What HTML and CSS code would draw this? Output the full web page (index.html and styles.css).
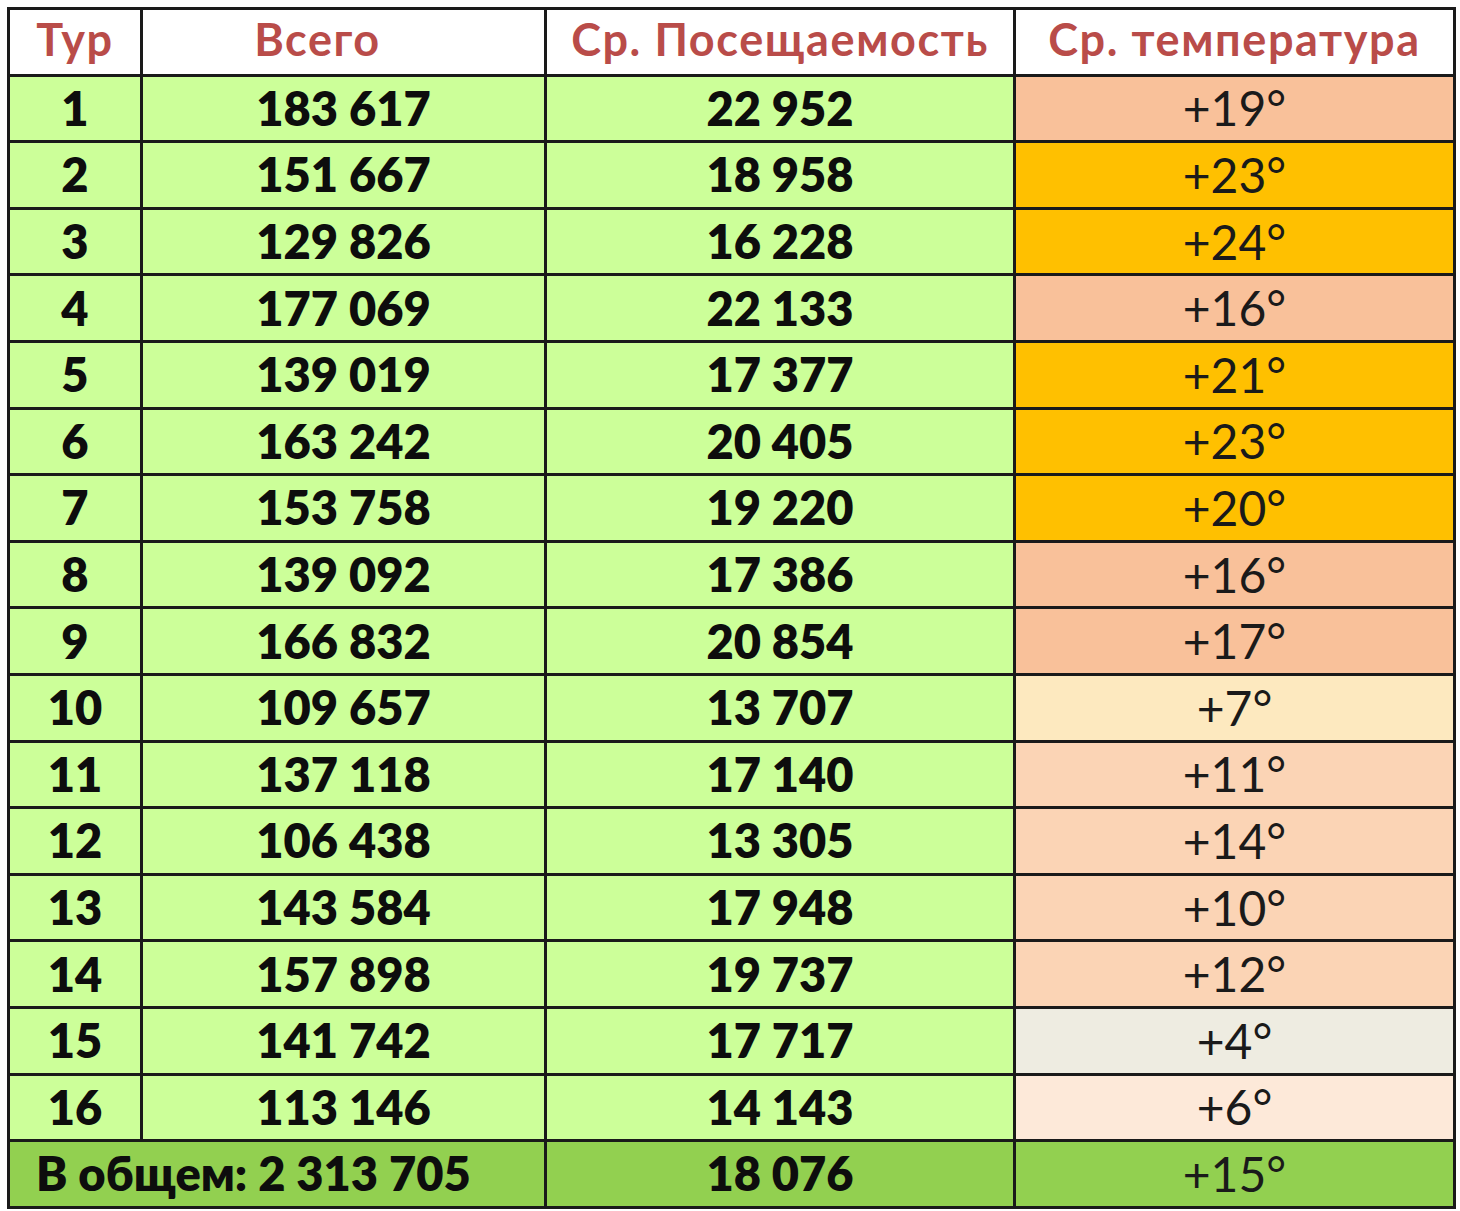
FILE: index.html
```html
<!DOCTYPE html>
<html lang="ru">
<head>
<meta charset="utf-8">
<title>Посещаемость</title>
<link rel="stylesheet" href="styles.css">
</head>
<body>
<table class="stats">
  <colgroup>
    <col class="c1"><col class="c2"><col class="c3"><col class="c4">
  </colgroup>
  <thead>
    <tr><th>Тур</th><th class="h-total">Всего</th><th>Ср. Посещаемость</th><th>Ср. температура</th></tr>
  </thead>
  <tbody>
    <tr><td>1</td><td>183 617</td><td>22 952</td><td class="t t-peach">+19°</td></tr>
    <tr><td>2</td><td>151 667</td><td>18 958</td><td class="t t-gold">+23°</td></tr>
    <tr><td>3</td><td>129 826</td><td>16 228</td><td class="t t-gold">+24°</td></tr>
    <tr><td>4</td><td>177 069</td><td>22 133</td><td class="t t-peach">+16°</td></tr>
    <tr><td>5</td><td>139 019</td><td>17 377</td><td class="t t-gold">+21°</td></tr>
    <tr><td>6</td><td>163 242</td><td>20 405</td><td class="t t-gold">+23°</td></tr>
    <tr><td>7</td><td>153 758</td><td>19 220</td><td class="t t-gold">+20°</td></tr>
    <tr><td>8</td><td>139 092</td><td>17 386</td><td class="t t-peach">+16°</td></tr>
    <tr><td>9</td><td>166 832</td><td>20 854</td><td class="t t-peach">+17°</td></tr>
    <tr><td>10</td><td>109 657</td><td>13 707</td><td class="t t-cream">+7°</td></tr>
    <tr><td>11</td><td>137 118</td><td>17 140</td><td class="t t-light">+11°</td></tr>
    <tr><td>12</td><td>106 438</td><td>13 305</td><td class="t t-light">+14°</td></tr>
    <tr><td>13</td><td>143 584</td><td>17 948</td><td class="t t-light">+10°</td></tr>
    <tr><td>14</td><td>157 898</td><td>19 737</td><td class="t t-light">+12°</td></tr>
    <tr><td>15</td><td>141 742</td><td>17 717</td><td class="t t-grey">+4°</td></tr>
    <tr><td>16</td><td>113 146</td><td>14 143</td><td class="t t-pale">+6°</td></tr>
  </tbody>
  <tfoot>
    <tr><td colspan="2" class="total-label">В общем: 2 313 705</td><td>18 076</td><td class="t">+15°</td></tr>
  </tfoot>
</table>
</body>
</html>
```

FILE: styles.css
```css
html, body {
  margin: 0;
  padding: 0;
  background: #ffffff;
}

body {
  padding: 7px 0 0 7px;
  font-family: Lato, "Noto Sans", "Liberation Sans", sans-serif;
}

.stats {
  border-collapse: collapse;
  table-layout: fixed;
  width: 1446px;
  border: 3px solid #1a1a1a;
}

.c1 { width: 133px; }
.c2 { width: 404px; }
.c3 { width: 469px; }
.c4 { width: 440px; }

.stats tr {
  height: 66.6px;
}

.stats th,
.stats td {
  border: 3px solid #1a1a1a;
  padding: 0;
  text-align: center;
  vertical-align: middle;
  line-height: 1;
}

.stats th {
  background: #ffffff;
  color: #b94c49;
  font-size: 45px;
  font-weight: 700;
  letter-spacing: 1.6px;
  padding-bottom: 4px;
}

.stats th.h-total {
  padding-right: 52px;
}

.stats td {
  background: #ccff99;
  color: #0d0d0d;
  font-size: 47px;
  font-weight: 800;
}

.stats td.t {
  font-weight: 400;
  font-size: 48px;
  color: #1a1a1a;
}

.t-peach { background: #f9c19a !important; }
.t-gold  { background: #ffc000 !important; }
.t-cream { background: #fde9bf !important; }
.t-light { background: #fbd4b5 !important; }
.t-grey  { background: #eeece1 !important; }
.t-pale  { background: #fde9d9 !important; }

.stats tfoot td {
  background: #92d050;
}

.stats tfoot td.total-label {
  text-align: left;
  padding-left: 26px;
}
```
